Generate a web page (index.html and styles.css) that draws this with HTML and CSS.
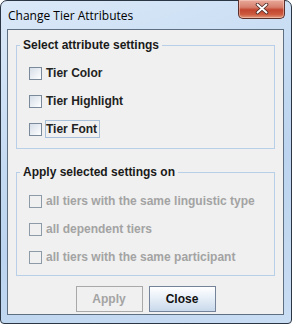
FILE: index.html
```html
<!DOCTYPE html>
<html lang="en">
<head>
    <meta charset="UTF-8">
    <meta name="viewport" content="width=device-width, initial-scale=1.0">
    <link rel="stylesheet" href="styles.css">
</head>
<body>
    <div class="window">
        <div class="titlebar">
            <span class="title">Change Tier Attributes</span>
            <div class="close-btn">
                <svg width="16" height="12" viewBox="0 0 16 12">
                    <path d="M3.5 1.5 L12.5 9.5 M12.5 1.5 L3.5 9.5" stroke="#4a2a26" stroke-width="3.6" stroke-linecap="round"/>
                    <path d="M3.5 1.5 L12.5 9.5 M12.5 1.5 L3.5 9.5" stroke="#ffffff" stroke-width="1.9" stroke-linecap="round"/>
                </svg>
            </div>
        </div>
        <div class="content">
            <fieldset class="group group-first">
                <legend>Select attribute settings</legend>
                <div class="row"><span class="box"></span><span class="label">Tier Color</span></div>
                <div class="row"><span class="box"></span><span class="label">Tier Highlight</span></div>
                <div class="row"><span class="box"></span><span class="label focused">Tier Font</span></div>
            </fieldset>
            <fieldset class="group group-second">
                <legend>Apply selected settings on</legend>
                <div class="row disabled"><span class="box"></span><span class="label">all tiers with the same linguistic type</span></div>
                <div class="row disabled"><span class="box"></span><span class="label">all dependent tiers</span></div>
                <div class="row disabled"><span class="box"></span><span class="label">all tiers with the same participant</span></div>
            </fieldset>
            <div class="buttons">
                <button class="btn btn-disabled">Apply</button>
                <button class="btn btn-default">Close</button>
            </div>
        </div>
    </div>
</body>
</html>
```

FILE: styles.css
```css
body {
    margin: 0;
    padding: 0;
    background-color: #ffffff;
    font-family: 'Liberation Sans', Arial, sans-serif;
}
.window {
    width: 292px;
    height: 324px;
    box-sizing: border-box;
    border: 1px solid #2b3644;
    border-radius: 7px 7px 4px 4px;
    background: linear-gradient(160deg, #dbe9f8 0%, #c4daf2 40%, #bcd4ef 60%, #c9ddf3 100%);
    padding: 0 7px 8px 6px;
    display: flex;
    flex-direction: column;
}
.titlebar {
    height: 28px;
    display: flex;
    justify-content: space-between;
    align-items: flex-start;
    padding-left: 1px;
}
.title {
    font-family: 'Open Sans', 'Noto Sans', sans-serif;
    font-size: 12px;
    color: #000000;
    margin-top: 7px;
    line-height: 16px;
}
.close-btn {
    width: 47px;
    height: 19px;
    margin-top: -1px;
    margin-right: -1px;
    box-sizing: border-box;
    border: 1px solid #5b2f2a;
    border-top: none;
    border-radius: 0 0 5px 5px;
    background: linear-gradient(#e9a99b 0%, #d7806e 40%, #c2452f 55%, #cc5a3f 80%, #e29a7c 100%);
    display: flex;
    justify-content: center;
    align-items: center;
    box-shadow: inset 0 0 0 1px rgba(255, 220, 210, 0.45);
}
.content {
    flex: 1;
    border: 1px solid #5f6f82;
    background-color: #f0f0f0;
    padding: 8px 8px 0 8px;
    display: flex;
    flex-direction: column;
}
.group {
    margin: 0;
    border: 1px solid #b8cfe7;
    padding: 7px 0 5px 12px;
    min-width: 0;
}
.group-second {
    margin-top: 16px;
    padding: 8px 0 4px 12px;
}
.group legend {
    font-size: 12px;
    font-weight: bold;
    line-height: 14px;
    color: #1a1a1a;
    padding: 0 3px;
    margin-left: -9px;
}
.row {
    height: 28px;
    display: flex;
    align-items: center;
    font-size: 12px;
    font-weight: bold;
    color: #222222;
}
.box {
    width: 13px;
    height: 13px;
    box-sizing: border-box;
    border: 1px solid #7b8a9b;
    background: linear-gradient(135deg, #d6dee8 0%, #eef2f6 60%, #ffffff 100%);
}
.label {
    margin-left: 3px;
    border: 1px solid transparent;
    padding: 0 2px 0 0;
    line-height: 16px;
}
.label.focused {
    border-color: #a7bfd9;
}
.row.disabled {
    color: #a3a3a3;
}
.row.disabled .box {
    border-color: #8d9aa8;
    background: #f0f0f0;
}
.buttons {
    display: flex;
    justify-content: center;
    gap: 6px;
    margin-top: 10px;
}
.btn {
    width: 67px;
    height: 26px;
    box-sizing: border-box;
    font-family: 'Liberation Sans', Arial, sans-serif;
    font-size: 12px;
    font-weight: bold;
    padding: 0;
    border-radius: 0;
}
.btn-disabled {
    border: 1px solid #a9a9a9;
    background: #f0f0f0;
    color: #a3a3a3;
}
.btn-default {
    border: 1px solid #75839a;
    background: linear-gradient(#ffffff 0%, #eaf1f9 40%, #c9d9eb 100%);
    color: #111111;
}
```
